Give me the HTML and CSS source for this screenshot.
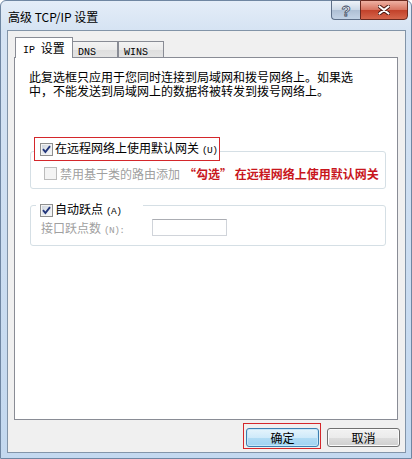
FILE: index.html
```html
<!DOCTYPE html>
<html lang="zh-CN">

<head>
  <title>高级 TCP/IP 设置</title>
  <meta charset="UTF-8" />
  <meta name="viewport" content="width=device-width,initial-scale=1" />
  <link rel="stylesheet" href="styles.css">
</head>

<body>
  <div class="window">
    <div class="titlebar">
      <span class="title">高级 TCP/IP 设置</span>
      <div class="caption-btns">
        <span class="cap help">?</span>
        <span class="cap close">
          <svg width="12" height="10" viewBox="0 0 12 10">
            <path d="M1.5 1.5 L10.5 8.5 M10.5 1.5 L1.5 8.5" stroke="#4a1810" stroke-width="4" stroke-linecap="round" fill="none" />
            <path d="M1.5 1.5 L10.5 8.5 M10.5 1.5 L1.5 8.5" stroke="#fff" stroke-width="2.2" stroke-linecap="round" fill="none" />
          </svg>
        </span>
      </div>
    </div>

    <div class="client">
      <div class="tabstrip">
        <div class="tab active"><span class="lat">IP</span> 设置</div>
        <div class="tab"><span class="lat">DNS</span></div>
        <div class="tab"><span class="lat">WINS</span></div>
      </div>

      <div class="panel">
        <p class="note">此复选框只应用于您同时连接到局域网和拨号网络上。如果选中，不能发送到局域网上的数据将被转发到拨号网络上。</p>

        <div class="group g-gateway">
          <label class="group-head mark">
            <span class="cb checked">
              <svg width="11" height="11" viewBox="0 0 11 11">
                <path d="M2 5.2 L4.4 8 L9 2.2" stroke="#22357a" stroke-width="1.9" fill="none" />
              </svg>
            </span>
            <span class="text">在远程网络上使用默认网关<span class="lat key">(U)</span></span>
          </label>
          <div class="row row-classful">
            <span class="cb disabled"></span>
            <span class="dim">禁用基于类的路由添加</span>
            <span class="hint">“勾选” 在远程网络上使用默认网关</span>
          </div>
        </div>

        <div class="group g-metric">
          <label class="group-head">
            <span class="cb checked">
              <svg width="11" height="11" viewBox="0 0 11 11">
                <path d="M2 5.2 L4.4 8 L9 2.2" stroke="#22357a" stroke-width="1.9" fill="none" />
              </svg>
            </span>
            <span class="text">自动跃点<span class="lat key">(A)</span></span>
          </label>
          <div class="row row-metric">
            <span class="dim metric-label">接口跃点数<span class="lat key">(N):</span></span>
            <span class="textbox"></span>
          </div>
        </div>
      </div>

      <div class="footer">
        <div class="mark ok-wrap"><button class="btn default">确定</button></div>
        <button class="btn cancel">取消</button>
      </div>
    </div>
  </div>
</body>

</html>
```

FILE: styles.css
```css
body,
html {
  margin: 0;
  padding: 0;
  border: 0;
}

body {
  font-family: "Noto Sans CJK SC", sans-serif;
  font-size: 12px;
  color: #000;
}

.window {
  width: 412px;
  height: 459px;
  box-sizing: border-box;
  border: 1px solid #6f86a2;
  border-radius: 6px 6px 0 0;
  background: linear-gradient(to bottom, #e4edf8 0, #d5e3f3 30px, #c3d8ef 100%);
  display: flex;
  flex-direction: column;
}

/* title bar */

.titlebar {
  height: 29px;
  flex: none;
  display: flex;
  justify-content: space-between;
  align-items: flex-start;
  padding-left: 7px;
}

.title {
  padding-top: 8px;
  line-height: 16px;
}

.caption-btns {
  display: flex;
  margin-top: -1px;
  margin-right: 3px;
}

.cap {
  height: 20px;
  box-sizing: border-box;
  display: flex;
  align-items: center;
  justify-content: center;
  border: 1px solid #5d6f88;
}

.help {
  width: 29px;
  border-right: 0;
  border-radius: 0 0 0 4px;
  background: linear-gradient(to bottom, #eef3f9 0%, #cbd8e7 50%, #aebfd4 51%, #c3d3e6 100%);
  font-family: "Liberation Sans", sans-serif;
  font-weight: bold;
  font-size: 15px;
  color: #f4f7fb;
  -webkit-text-stroke: 0.8px #3b4b62;
}

.close {
  width: 48px;
  border-color: #6b2a20;
  border-radius: 0 0 4px 0;
  background: linear-gradient(to bottom, #eeb1a3 0%, #d7735f 50%, #c2412a 51%, #d5664c 100%);
}

/* client area */

.client {
  flex: 1;
  margin: 0 5px 5px 6px;
  border: 1px solid #8294a8;
  background: #f0f0f0;
  padding: 7px 7px 0 6px;
  display: flex;
  flex-direction: column;
}

.lat {
  font-family: "Liberation Mono", monospace;
  font-size: 10px;
}

.tabstrip {
  height: 19px;
  display: flex;
  align-items: flex-end;
  padding-left: 1px;
  position: relative;
  z-index: 1;
}

.tab {
  box-sizing: border-box;
  width: 46px;
  height: 16px;
  line-height: 15px;
  padding-left: 5px;
  border: 1px solid #898c95;
  border-bottom: 0;
  background: linear-gradient(to bottom, #f3f3f3 0%, #ebebeb 50%, #dedede 51%, #e4e4e4 100%);
}

.tab+.tab {
  margin-left: -1px;
}

.tab+.tab+.tab {
  margin-left: 0;
}

.tab.active {
  width: 58px;
  height: 21px;
  line-height: 19px;
  padding-left: 7px;
  margin-bottom: -1px;
  background: #fff;
}

.tab.active .lat {
  margin-right: 3px;
}

.panel {
  height: 363px;
  box-sizing: border-box;
  border: 1px solid #898c95;
  background: #fff;
  flex: none;
}

.note {
  margin: 0;
  padding: 12px 0 0 14px;
  width: 325px;
  line-height: 14px;
}

.group {
  border: 1px solid #d5dfe5;
  border-radius: 3px;
  margin: 0 11px 0 15px;
}

.g-gateway {
  margin-top: 53px;
  padding-bottom: 3px;
}

.g-metric {
  margin-top: 16px;
  padding-bottom: 9px;
}

.group-head {
  display: flex;
  align-items: center;
  gap: 2px;
  background: #fff;
  width: fit-content;
}

.g-gateway .group-head {
  margin: -15px 0 0 3px;
  height: 24px;
  box-sizing: border-box;
  padding: 0 2px 0 5px;
}

.g-metric .group-head {
  margin: -3px 0 0 5px;
  height: 14px;
  width: 107px;
  box-sizing: border-box;
  padding-left: 4px;
}

.text {
  line-height: 14px;
}

.mark {
  border: 1px solid #d4272b;
}

.key {
  font-size: 9.5px;
  letter-spacing: -0.6px;
  margin-left: 3px;
}

.cb {
  width: 13px;
  height: 13px;
  box-sizing: border-box;
  flex: none;
  border: 1px solid #8e8f8f;
  background: #f4f4f4;
}

.cb.checked {
  background: linear-gradient(135deg, #c9d0da 0%, #eef1f4 70%, #f8f9fa 100%);
  box-shadow: inset 0 0 0 1px #f3f3f3;
}

.cb svg {
  display: block;
}

.cb.disabled {
  border-color: #bcbcbc;
  background: #f4f4f4;
}

.row {
  display: flex;
  align-items: center;
}

.row-classful {
  height: 24px;
  padding-left: 13px;
}

.row-classful .dim {
  margin-left: 3px;
}

.dim {
  color: #a0a0a0;
}

.hint {
  margin-left: 4px;
  color: #c8161d;
  font-weight: bold;
}

.row-metric {
  margin-top: 2px;
  padding-left: 10px;
}

.metric-label {
  width: 111px;
}

.textbox {
  width: 75px;
  height: 17px;
  box-sizing: border-box;
  border: 1px solid #d0d4da;
  border-top-color: #abadb3;
  background: #fff;
}

/* buttons */

.footer {
  display: flex;
  justify-content: flex-end;
  align-items: flex-start;
  padding-top: 3px;
  margin-right: -2px;
}

.ok-wrap {
  padding: 4px 1px 1px 2px;
}

.btn {
  width: 73px;
  height: 19px;
  padding: 0;
  font-family: "Noto Sans CJK SC", sans-serif;
  font-size: 12px;
  color: #000;
  border: 1px solid #707070;
  border-radius: 3px;
  background: linear-gradient(to bottom, #f2f2f2 0%, #ebebeb 50%, #dddddd 51%, #cfcfcf 100%);
  box-shadow: inset 0 0 0 1px #fbfbfb;
  display: block;
}

.btn.default {
  border-color: #3c7fb1;
  background: linear-gradient(to bottom, #e5f4fc 0%, #cfeafa 50%, #b2dcf4 51%, #9fd3f2 100%);
  box-shadow: inset 0 0 0 1px #c6e8f9;
}

.btn.cancel {
  margin: 5px 0 0 6px;
}
```
